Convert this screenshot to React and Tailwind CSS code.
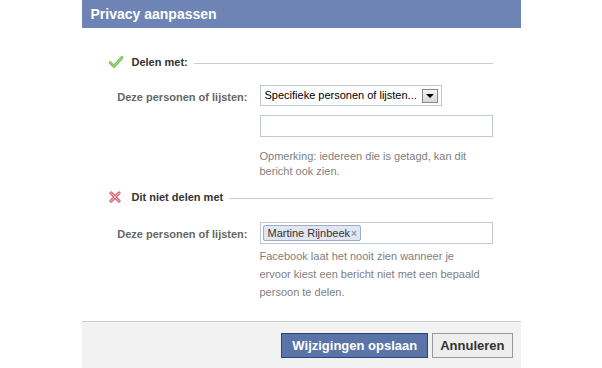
import React from 'react';

const CheckIcon = () => (
  <svg width="14" height="12" viewBox="0 0 14 12">
    <path d="M1 6.5 L5 10.5 L13 1.5" fill="none" stroke="#6fbf4a" strokeWidth="3" strokeLinecap="round" strokeLinejoin="round" />
    <path d="M1 6.5 L5 10.5 L13 1.5" fill="none" stroke="#b6e29a" strokeWidth="1" strokeLinecap="round" strokeLinejoin="round" />
  </svg>
);

const CrossIcon = () => (
  <svg width="12" height="12" viewBox="0 0 12 12">
    <path d="M2 2 L10 10 M10 2 L2 10" fill="none" stroke="#d9707a" strokeWidth="3.2" strokeLinecap="round" />
    <path d="M2 2 L10 10 M10 2 L2 10" fill="none" stroke="#f3b9be" strokeWidth="1" strokeLinecap="round" />
  </svg>
);

const SectionTitle = ({ icon, title }) => (
  <div className="flex items-center h-[14px]">
    <div className="w-[23px] flex items-center">{icon}</div>
    <span className="font-bold text-[#333333] text-[11px] pr-[6px]">{title}</span>
    <div className="flex-1 h-px bg-[#cccccc] mt-[2px]" />
  </div>
);

const Row = ({ children, label }) => (
  <div className="flex">
    <div className="w-[151px] whitespace-nowrap text-right font-bold text-[#666666] text-[11px] pr-[12px] pt-[4px]">{label}</div>
    <div className="w-[233px]">{children}</div>
  </div>
);

const App = () => {
  return (
    <div className="w-[602px] h-[368px] bg-white flex justify-center" style={{ fontFamily: '"Liberation Sans", Arial, sans-serif' }}>
      <div className="w-[439px] h-full flex flex-col">
        <div className="h-[28px] bg-[#6d84b4] flex items-center pl-[9px]">
          <span className="text-white font-bold text-[14px]">Privacy aanpassen</span>
        </div>

        <div className="flex-1 pl-[27px] pr-[28px] pt-[27px]">
          <SectionTitle icon={<CheckIcon />} title="Delen met:" />

          <div className="mt-[16px]">
            <Row label="Deze personen of lijsten:">
              <div className="w-[182px] h-[21px] border border-[#bdc7d8] flex items-center pl-[4px] pr-[3px] justify-between">
                <span className="text-[11px] text-black">Specifieke personen of lijsten...</span>
                <div className="w-[16px] h-[14px] border border-[#888888] bg-gradient-to-b from-[#f4f4f4] to-[#d8d8d8] flex items-center justify-center">
                  <div className="w-0 h-0 border-l-[4px] border-r-[4px] border-t-[4px] border-l-transparent border-r-transparent border-t-black" />
                </div>
              </div>
              <div className="mt-[9px] w-[233px] h-[22px] border border-[#bdc7d8]" />
              <p className="mt-[12px] text-[11px] leading-[15px] text-[#808080]">
                Opmerking: iedereen die is getagd, kan dit<br />bericht ook zien.
              </p>
            </Row>
          </div>

          <div className="mt-[11px]">
            <SectionTitle icon={<CrossIcon />} title="Dit niet delen met" />
          </div>

          <div className="mt-[18px]">
            <Row label="Deze personen of lijsten:">
              <div className="w-[233px] h-[22px] border border-[#bdc7d8] flex items-center pl-[2px]">
                <div className="h-[16px] border border-[#9dacc9] bg-[#e2e6f0] rounded-[2px] flex items-center pl-[4px] pr-[3px] text-[11px] text-[#333333]">
                  Martine Rijnbeek
                  <span className="ml-[1px] text-[#8a9bbd] text-[10px] font-bold">×</span>
                </div>
              </div>
              <p className="mt-[3px] text-[11px] leading-[18px] text-[#808080]">
                Facebook laat het nooit zien wanneer je<br />ervoor kiest een bericht niet met een bepaald<br />persoon te delen.
              </p>
            </Row>
          </div>
        </div>

        <div className="h-[47px] bg-[#f2f2f2] border-t border-[#cccccc] flex justify-end items-start pt-[11px] pr-[8px] gap-[4px]">
          <button className="h-[25px] px-[10px] bg-[#5b74a8] border border-[#29447e] text-white font-bold text-[13px]">
            Wijzigingen opslaan
          </button>
          <button className="h-[25px] px-[7px] bg-[#eeeeee] border border-[#999999] text-[#333333] font-bold text-[13px]">
            Annuleren
          </button>
        </div>
      </div>
    </div>
  );
};

export default App;
